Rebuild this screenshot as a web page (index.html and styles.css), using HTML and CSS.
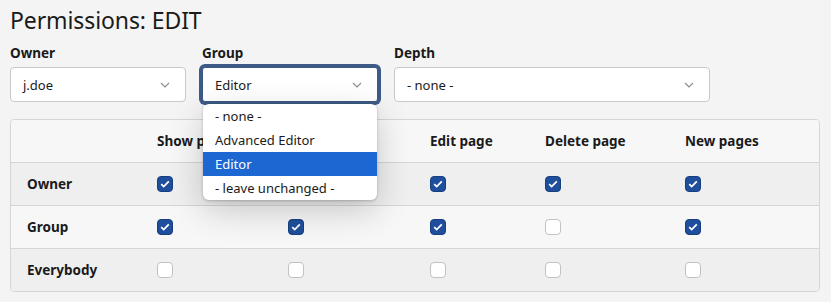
FILE: index.html
```html
<!DOCTYPE html>
<html>
<head>
<meta charset="utf-8">
<link rel="stylesheet" href="styles.css">
</head>
<body>
<h1 class="title">Permissions: EDIT</h1>
<div class="fields">
  <div class="field owner">
    <div class="label">Owner</div>
    <div class="select"><span>j.doe</span><svg class="chev" width="10" height="6" viewBox="0 0 10 6"><path d="M1 1l4 4 4-4" fill="none" stroke="#8a8a8a" stroke-width="1.1"/></svg></div>
  </div>
  <div class="field group">
    <div class="label">Group</div>
    <div class="select-wrap">
      <div class="select focused"><span>Editor</span><svg class="chev" width="10" height="6" viewBox="0 0 10 6"><path d="M1 1l4 4 4-4" fill="none" stroke="#8a8a8a" stroke-width="1.1"/></svg></div>
      <ul class="menu">
        <li>- none -</li>
        <li>Advanced Editor</li>
        <li class="active">Editor</li>
        <li>- leave unchanged -</li>
      </ul>
    </div>
  </div>
  <div class="field depth">
    <div class="label">Depth</div>
    <div class="select"><span>- none -</span><svg class="chev" width="10" height="6" viewBox="0 0 10 6"><path d="M1 1l4 4 4-4" fill="none" stroke="#8a8a8a" stroke-width="1.1"/></svg></div>
  </div>
</div>

<div class="perm">
  <div class="row head">
    <div class="cell"></div>
    <div class="cell">Show page</div>
    <div class="cell">Edit content</div>
    <div class="cell">Edit page</div>
    <div class="cell">Delete page</div>
    <div class="cell">New pages</div>
  </div>
  <div class="row shade">
    <div class="cell name">Owner</div>
    <div class="cell"><span class="cb on"><svg width="10" height="8" viewBox="0 0 10 8"><path d="M1.2 4.2l2.5 2.4L8.8 1.4" fill="none" stroke="#fff" stroke-width="1.8"/></svg></span></div>
    <div class="cell"><span class="cb on"><svg width="10" height="8" viewBox="0 0 10 8"><path d="M1.2 4.2l2.5 2.4L8.8 1.4" fill="none" stroke="#fff" stroke-width="1.8"/></svg></span></div>
    <div class="cell"><span class="cb on"><svg width="10" height="8" viewBox="0 0 10 8"><path d="M1.2 4.2l2.5 2.4L8.8 1.4" fill="none" stroke="#fff" stroke-width="1.8"/></svg></span></div>
    <div class="cell"><span class="cb on"><svg width="10" height="8" viewBox="0 0 10 8"><path d="M1.2 4.2l2.5 2.4L8.8 1.4" fill="none" stroke="#fff" stroke-width="1.8"/></svg></span></div>
    <div class="cell"><span class="cb on"><svg width="10" height="8" viewBox="0 0 10 8"><path d="M1.2 4.2l2.5 2.4L8.8 1.4" fill="none" stroke="#fff" stroke-width="1.8"/></svg></span></div>
  </div>
  <div class="row">
    <div class="cell name">Group</div>
    <div class="cell"><span class="cb on"><svg width="10" height="8" viewBox="0 0 10 8"><path d="M1.2 4.2l2.5 2.4L8.8 1.4" fill="none" stroke="#fff" stroke-width="1.8"/></svg></span></div>
    <div class="cell"><span class="cb on"><svg width="10" height="8" viewBox="0 0 10 8"><path d="M1.2 4.2l2.5 2.4L8.8 1.4" fill="none" stroke="#fff" stroke-width="1.8"/></svg></span></div>
    <div class="cell"><span class="cb on"><svg width="10" height="8" viewBox="0 0 10 8"><path d="M1.2 4.2l2.5 2.4L8.8 1.4" fill="none" stroke="#fff" stroke-width="1.8"/></svg></span></div>
    <div class="cell"><span class="cb"></span></div>
    <div class="cell"><span class="cb on"><svg width="10" height="8" viewBox="0 0 10 8"><path d="M1.2 4.2l2.5 2.4L8.8 1.4" fill="none" stroke="#fff" stroke-width="1.8"/></svg></span></div>
  </div>
  <div class="row shade last">
    <div class="cell name">Everybody</div>
    <div class="cell"><span class="cb"></span></div>
    <div class="cell"><span class="cb"></span></div>
    <div class="cell"><span class="cb"></span></div>
    <div class="cell"><span class="cb"></span></div>
    <div class="cell"><span class="cb"></span></div>
  </div>
</div>
</body>
</html>
```

FILE: styles.css
```css
* { box-sizing: border-box; }
html, body { height: 100%; }
body {
  margin: 0;
  padding: 4px 10px 0 10px;
  background: #f4f4f4;
  font-family: "Noto Sans", "Open Sans", sans-serif;
  color: #1c1c1c;
}
.title {
  margin: 0;
  font-size: 23px;
  font-weight: 400;
  line-height: 32px;
  color: #1a1a1a;
  letter-spacing: -0.1px;
}
.fields {
  display: flex;
  gap: 16px;
  margin-top: 7px;
}
.label {
  font-size: 13.5px;
  font-weight: 700;
  line-height: 20px;
  margin-bottom: 4px;
  color: #1a1a1a;
}
.owner { width: 176px; }
.group { width: 176px; }
.depth { width: 316px; }
.select-wrap { position: relative; }
.select {
  height: 35px;
  background: #fff;
  border: 1px solid #c9c9c9;
  border-radius: 4px;
  display: flex;
  align-items: center;
  justify-content: space-between;
  padding: 0 15px 0 12px;
  font-size: 13px;
  color: #1a1a1a;
}
.select.focused {
  border-color: #3a5984;
  box-shadow: 0 0 0 3px #3d5b86;
  border-radius: 3px;
}
.menu {
  position: absolute;
  left: 1px;
  right: 1px;
  top: 37px;
  margin: 0;
  padding: 0;
  list-style: none;
  background: #fff;
  border-radius: 6px;
  box-shadow: 0 10px 34px rgba(0,0,0,0.20), 0 1px 3px rgba(0,0,0,0.22);
  overflow: hidden;
  z-index: 5;
}
.menu li {
  height: 24px;
  line-height: 24px;
  padding-left: 12px;
  font-size: 13px;
  color: #1a1a1a;
}
.menu li.active {
  background: #1c67d2;
  color: #fff;
}
.perm {
  margin-top: 17px;
  width: 810px;
  border: 1px solid #d6d6d6;
  border-radius: 4px;
  overflow: hidden;
  background: #f7f7f7;
}
.row {
  display: grid;
  grid-template-columns: 130px 131px 142px 115px 140px 1fr;
  height: 43px;
  border-bottom: 1px solid #d6d6d6;
  background: #f7f7f7;
}
.row.head { height: 43px; }
.row.shade { background: #efefef; }
.row.last { border-bottom: none; height: 42px; }
.cell {
  display: flex;
  align-items: center;
  padding-left: 16px;
  font-size: 13.5px;
  font-weight: 700;
  color: #1a1a1a;
  white-space: nowrap;
}
.cb {
  width: 16px;
  height: 16px;
  border-radius: 4px;
  border: 1px solid #c2c2c2;
  background: #fff;
  display: flex;
  align-items: center;
  justify-content: center;
}
.cb.on {
  background: #1f4f9c;
  border-color: #173f80;
}
```
